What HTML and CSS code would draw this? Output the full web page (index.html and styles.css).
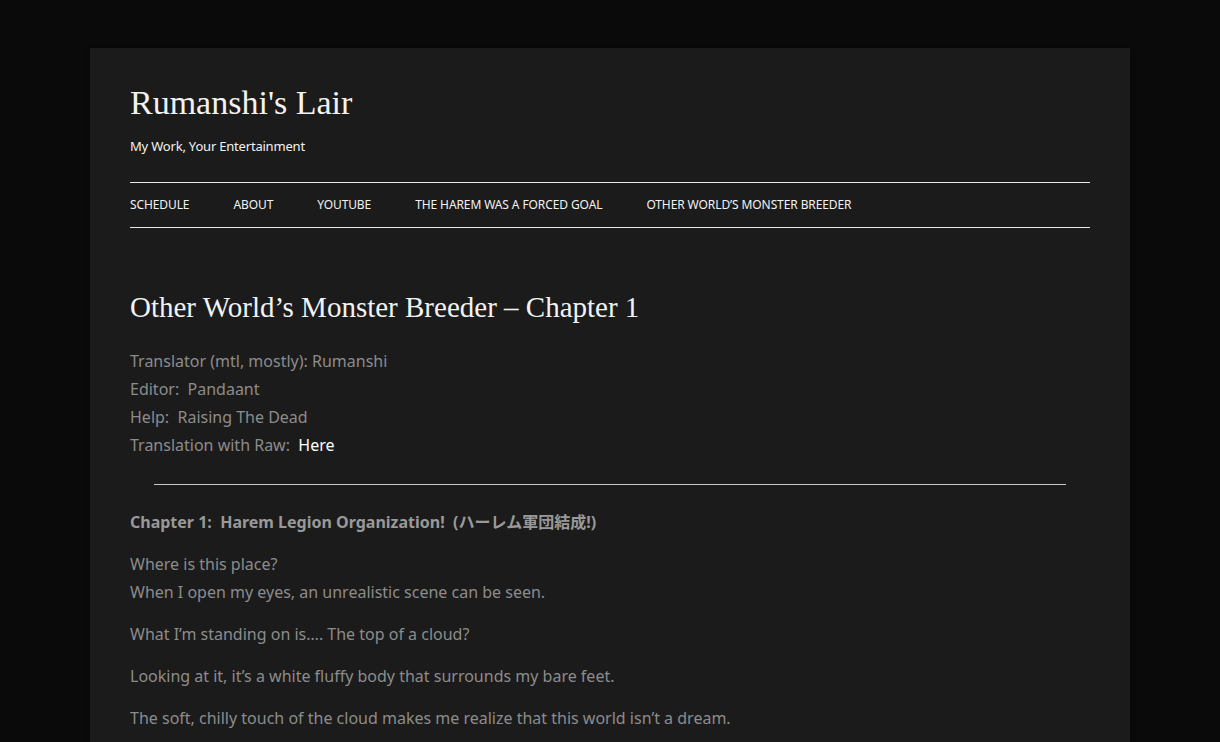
FILE: index.html
```html
<!DOCTYPE html>
<html lang="en">
<head>
<meta charset="utf-8">
<title>Other World's Monster Breeder – Chapter 1 | Rumanshi's Lair</title>
<link rel="stylesheet" href="styles.css">
</head>
<body>
<div class="page">
  <header class="site-header">
    <h1 class="site-title">Rumanshi's Lair</h1>
    <p class="site-desc">My Work, Your Entertainment</p>
    <nav class="main-nav">
      <a href="#">Schedule</a>
      <a href="#">About</a>
      <a href="#">YouTube</a>
      <a href="#">The Harem Was a Forced Goal</a>
      <a href="#">Other World’s Monster Breeder</a>
    </nav>
  </header>
  <article class="entry">
    <h2 class="entry-title">Other World’s Monster Breeder – Chapter 1</h2>
    <div class="credits">
      <p>Translator (mtl, mostly): Rumanshi<br>Editor:&nbsp; Pandaant<br>Help:&nbsp; Raising The Dead<br>Translation with Raw:&nbsp; <a href="#">Here</a></p>
    </div>
    <hr class="sep">
    <p class="chap"><strong>Chapter 1:&nbsp; Harem Legion Organization!&nbsp; (ハーレム軍団結成!)</strong></p>
    <p>Where is this place?<br>When I open my eyes, an unrealistic scene can be seen.</p>
    <p>What I’m standing on is…. The top of a cloud?</p>
    <p>Looking at it, it’s a white fluffy body that surrounds my bare feet.</p>
    <p>The soft, chilly touch of the cloud makes me realize that this world isn’t a dream.</p>
  </article>
</div>
</body>
</html>
```
FILE: styles.css
```css
html, body {
  margin: 0;
  padding: 0;
}
body {
  background: #0a0a0a;
  font-family: "Noto Sans", "Noto Sans CJK JP", sans-serif;
  color: #8c8c8c;
  overflow: hidden;
}
.page {
  width: 960px;
  margin: 48px auto 0;
  padding: 0 40px 40px;
  background: #1b1b1b;
  box-shadow: 0 2px 6px rgba(0, 0, 0, 0.3);
}
.site-header {
  padding-top: 35px;
}
.site-title {
  margin: 0;
  font-family: "Liberation Serif", serif;
  font-weight: normal;
  font-size: 34px;
  line-height: 40px;
  color: #f2f2f2;
}
.site-desc {
  margin: 14px 0 0;
  font-size: 13px;
  line-height: 18px;
  color: #f2f2f2;
  letter-spacing: -0.2px;
}
.main-nav {
  margin-top: 27px;
  border-top: 1px solid #e8e8e8;
  border-bottom: 1px solid #e8e8e8;
  height: 44px;
  display: flex;
  align-items: center;
  gap: 44px;
}
.main-nav a {
  font-size: 12px;
  text-transform: uppercase;
  color: #f2f2f2;
  text-decoration: none;
  letter-spacing: -0.1px;
  padding-bottom: 1px;
}
.entry {
  padding-top: 60px;
}
.entry-title {
  margin: 0;
  font-family: "Liberation Serif", serif;
  font-weight: normal;
  font-size: 29px;
  line-height: 38px;
  color: #f2f2f2;
}
.entry p {
  margin: 0 0 14px;
  font-size: 16px;
  line-height: 28px;
}
.credits {
  margin-top: 21px;
}
.credits a {
  color: #ffffff;
  text-decoration: none;
}
.sep {
  margin: 25px 24px 23px;
  border: 0;
  border-top: 1px solid #c8c8c8;
  height: 0;
}
.chap strong {
  font-weight: bold;
  color: #999999;
}
```
